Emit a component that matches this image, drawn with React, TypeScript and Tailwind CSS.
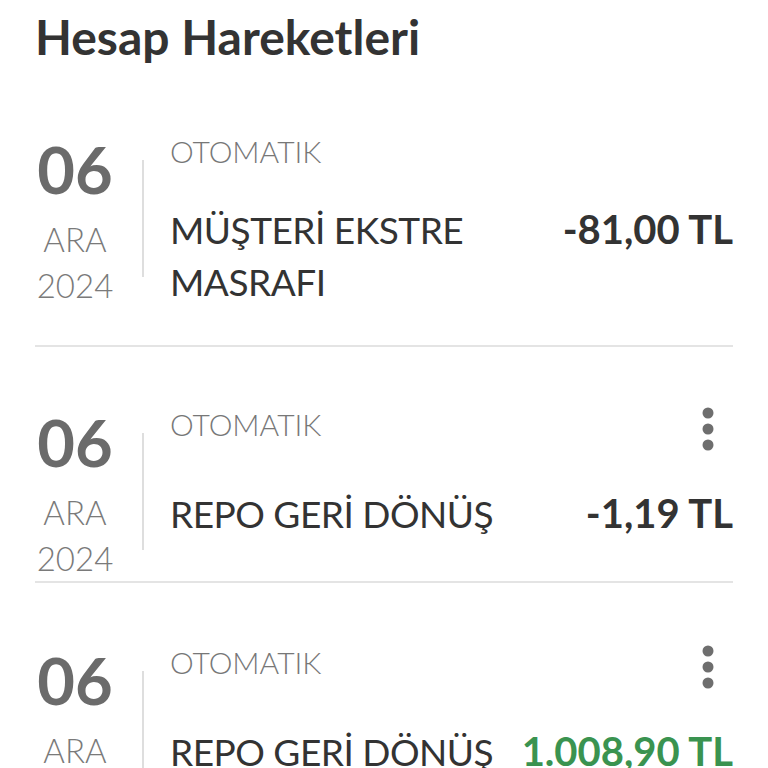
import React from 'react';

type Tx = {
  day: string;
  month: string;
  year: string;
  type: string;
  name: string;
  amount: string;
  positive?: boolean;
  menu?: boolean;
  pad: string;
  gap: string;
};

const rows: Tx[] = [
  { day: '06', month: 'ARA', year: '2024', type: 'OTOMATIK', name: 'MÜŞTERİ EKSTRE MASRAFI', amount: '-81,00 TL', pad: 'pt-[26px]', gap: 'mt-[37px]' },
  { day: '06', month: 'ARA', year: '2024', type: 'OTOMATIK', name: 'REPO GERİ DÖNÜŞ', amount: '-1,19 TL', menu: true, pad: 'pt-[63px]', gap: 'mt-[48px]' },
  { day: '06', month: 'ARA', year: '2024', type: 'OTOMATIK', name: 'REPO GERİ DÖNÜŞ', amount: '1.008,90 TL', positive: true, menu: true, pad: 'pt-[65px]', gap: 'mt-[48px]' },
];

// vertical kebab menu
const Dots = () => (
  <svg width="12" height="44" viewBox="0 0 12 44" className="shrink-0 -mt-[3px] mr-[19px]">
    <circle cx="6" cy="6" r="5.5" fill="#6e6e6e" />
    <circle cx="6" cy="22" r="5.5" fill="#6e6e6e" />
    <circle cx="6" cy="38" r="5.5" fill="#6e6e6e" />
  </svg>
);

const Row = ({ tx }: { tx: Tx }) => (
  <div className={`flex h-[236px] border-b-2 border-[#e4e4e4] ${tx.pad}`}>
    {/* date */}
    <div className="w-[80px] shrink-0 flex flex-col items-center">
      <span className="text-[65px] leading-none font-bold text-[#6b6b6b]">{tx.day}</span>
      <span className="mt-[21px] text-[33px] leading-none font-light text-[#7a7a7a]">{tx.month}</span>
      <span className="mt-[13px] text-[33px] leading-none font-light text-[#7a7a7a]">{tx.year}</span>
    </div>

    <div className="ml-[27px] mt-[23px] w-[2px] h-[117px] bg-[#dedede] shrink-0" />

    {/* details */}
    <div className="ml-[26px] flex-1 min-w-0">
      <div className="flex h-[29px] items-start justify-between">
        <span className="text-[30px] leading-[29px] font-light text-[#777777]">{tx.type}</span>
        {tx.menu && <Dots />}
      </div>
      <div className={`flex items-baseline justify-between ${tx.gap}`}>
        <span className="flex-1 text-[37px] leading-[52px] font-normal tracking-[-0.5px] text-[#333333]">
          {tx.name}
        </span>
        <span
          className={`ml-2 shrink-0 text-[40px] leading-[52px] font-bold ${tx.positive ? 'text-[#3a9350]' : 'text-[#333333]'}`}
        >
          {tx.amount}
        </span>
      </div>
    </div>
  </div>
);

export default function App() {
  return (
    <div className="min-h-screen bg-white px-[35px]" style={{ fontFamily: 'Lato, "Open Sans", sans-serif' }}>
      <div className="h-[111px] pt-[13px]">
        <h1 className="text-[48px] leading-none font-bold text-[#333333]">Hesap Hareketleri</h1>
      </div>
      {rows.map((tx, i) => (
        <Row key={i} tx={tx} />
      ))}
    </div>
  );
}
